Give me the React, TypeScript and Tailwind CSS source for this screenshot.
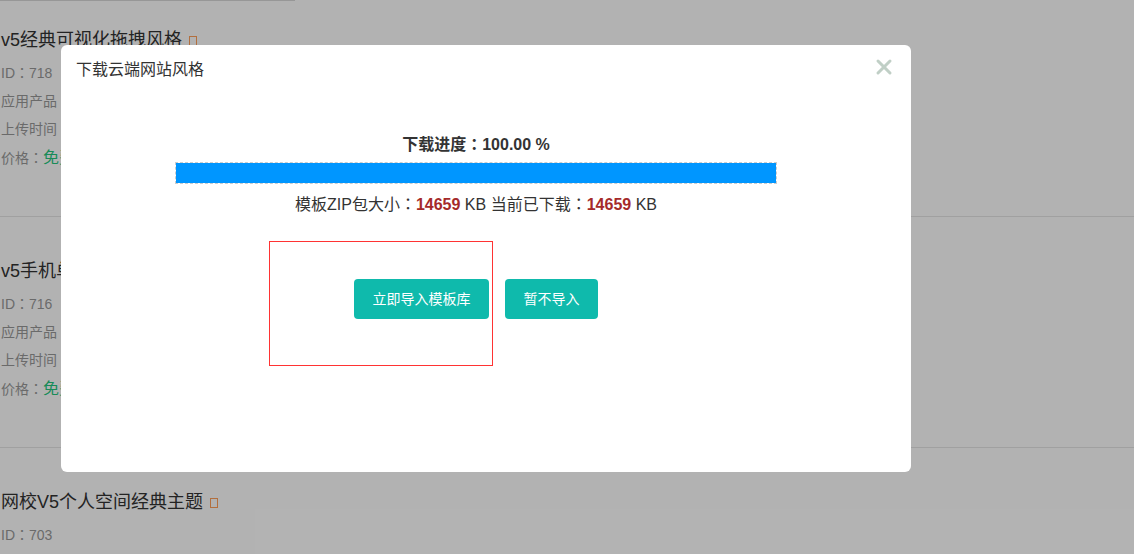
import { X } from "lucide-react";

const fontStack = "font-['Liberation_Sans','Noto_Sans_CJK_SC',sans-serif]";

const items = [
  { title: "v5经典可视化拖拽风格", id: "718", full: true },
  { title: "v5手机单页经典风格", id: "716", full: true },
  { title: "网校V5个人空间经典主题", id: "703", full: false },
];

function Colon() {
  return <span className="font-['Noto_Sans_CJK_TC',sans-serif] leading-none">：</span>;
}

function ListItem({ title, id, full }: { title: string; id: string; full: boolean }) {
  return (
    <div className={`h-[231px] pl-px pt-[40px] ${full ? "border-b border-[#e5e5e5]" : ""}`}>
      <h3 className="flex items-center text-lg leading-[28px] text-[#333]">
        {title}
        <span className="ml-[7px] mt-px h-[10px] w-[8px] border border-[#ff9f5a]"></span>
      </h3>
      <div className="mt-[5px] text-sm leading-[28px] text-[#999]">
        <p className="h-[28px]">
          ID
          <Colon />
          {id}
        </p>
        {full && (
          <>
            <p className="h-[28px]">
              应用产品
              <Colon />
              网站模板
            </p>
            <p className="h-[28px]">
              上传时间
              <Colon />
              2019-05-20
            </p>
            <p className="h-[28px] pt-px">
              价格
              <Colon />
              <span className="text-base text-[#25c77f]">免费</span>
            </p>
          </>
        )}
      </div>
    </div>
  );
}

export default function App() {
  return (
    <div className={`relative h-[554px] w-[1134px] overflow-hidden bg-white ${fontStack}`}>
      <div className="h-px w-[295px] bg-[#d8d8d8]"></div>
      <div className="-mt-[15px]">
        {items.map((item) => (
          <ListItem key={item.id} {...item} />
        ))}
      </div>

      <div className="absolute inset-0 bg-black/30"></div>

      <div className="absolute left-[61px] top-[45px] h-[427px] w-[850px] rounded-[6px] bg-white">
        <div className="flex items-start justify-between px-[15px] pt-[13px]">
          <h4 className="text-base leading-[24px] text-[#333]">下载云端网站风格</h4>
          <X className="mt-[-3px] h-[24px] w-[24px] text-[#c0cfc6]" strokeWidth={3} />
        </div>

        <div className="ml-[115px] mt-[51px] w-[600px] text-center text-[#333]">
          <p className="text-base leading-[24px] font-bold">
            下载进度
            <Colon />
            100.00 %
          </p>
          <div className="-mx-px mt-[5px] h-[22px] border border-dashed border-[#ccc]">
            <div className="h-full w-full bg-[#0096ff]"></div>
          </div>
          <p className="mt-[9px] text-base leading-[24px]">
            模板ZIP包大小
            <Colon />
            <span className="font-bold text-[#a52a2a]">14659</span> KB 当前已下载
            <Colon />
            <span className="font-bold text-[#a52a2a]">14659</span> KB
          </p>
        </div>

        <div className="ml-[208px] mt-[24px] flex items-start">
          <div className="flex h-[125px] w-[224px] justify-end border border-[#ff3333] pr-[3px] pt-[37px]">
            <button className="h-[40px] w-[135px] rounded-[4px] bg-[#0fbaac] text-sm text-white">
              立即导入模板库
            </button>
          </div>
          <button className="ml-[12px] mt-[38px] h-[40px] w-[93px] rounded-[4px] bg-[#0fbaac] text-sm text-white">
            暂不导入
          </button>
        </div>
      </div>
    </div>
  );
}
